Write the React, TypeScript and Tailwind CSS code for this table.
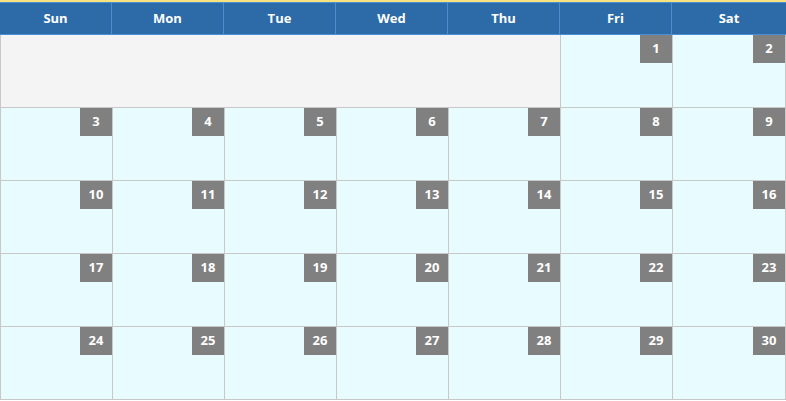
const days = ["Sun", "Mon", "Tue", "Wed", "Thu", "Fri", "Sat"];

const weeks: (number | null)[][] = [
  [null, null, null, null, null, 1, 2],
  [3, 4, 5, 6, 7, 8, 9],
  [10, 11, 12, 13, 14, 15, 16],
  [17, 18, 19, 20, 21, 22, 23],
  [24, 25, 26, 27, 28, 29, 30],
];

function DayCell({ n }: { n: number }) {
  return (
    <div className="h-[73px] bg-[#e8fbff] border-r border-b border-[#c8c8c8] flex justify-end">
      <div className="w-[32px] h-[28px] bg-[#808080] text-white text-[13px] font-bold flex items-center justify-center">
        {n}
      </div>
    </div>
  );
}

export default function App() {
  return (
    <div className="w-[786px] h-[401px] bg-white font-['Open_Sans',sans-serif]">
      <div className="h-[2px] bg-[#f7e27c]" />
      <div className="grid grid-cols-[repeat(6,112px)_1fr] bg-[#2c6ba8] border-t border-b border-[#4a8fd6] h-[33px]">
        {days.map((d) => (
          <div
            key={d}
            className="flex items-center justify-center text-white text-[13px] font-bold border-r border-[#4a8fd6] last:border-r-0"
          >
            {d}
          </div>
        ))}
      </div>
      <div className="grid grid-cols-[repeat(6,112px)_1fr] border-l border-[#c8c8c8]">
        <div className="col-span-5 h-[73px] bg-[#f4f4f4] border-r border-b border-[#c8c8c8]" />
        {weeks.flat().map((n, i) =>
          n === null ? null : <DayCell key={i} n={n} />
        )}
      </div>
    </div>
  );
}
